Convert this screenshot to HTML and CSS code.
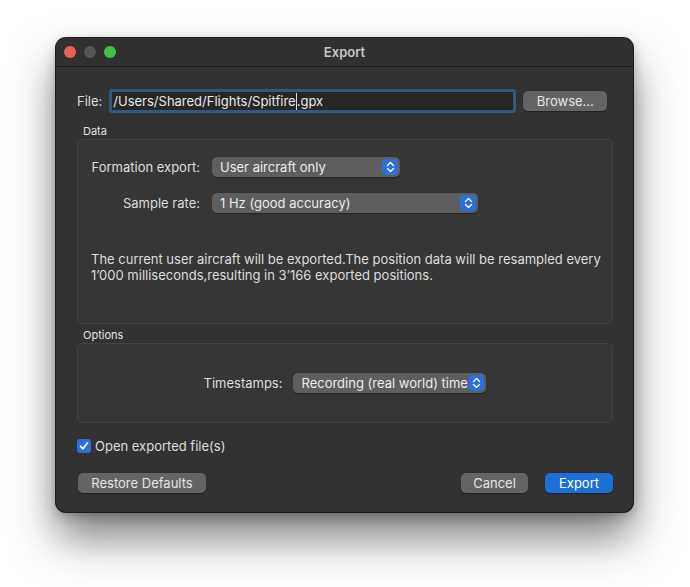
FILE: index.html
```html
<!DOCTYPE html>
<html>
<head>
<meta charset="utf-8">
<link rel="stylesheet" href="styles.css">
</head>
<body>
<div class="window">
  <div class="titlebar">
    <div class="lights">
      <span class="light red"></span>
      <span class="light gray"></span>
      <span class="light green"></span>
    </div>
    <div class="title">Export</div>
  </div>
  <div class="content">
    <div class="file-row">
      <span class="lbl">File:</span>
      <div class="field">/Users/Shared/Flights/Spitfire<span class="caret"></span>.gpx</div>
      <button class="btn browse">Browse...</button>
    </div>
    <div class="group-label data-label">Data</div>
    <div class="box data-box">
      <div class="form-row">
        <span class="row-lbl">Formation export:</span>
        <div class="popup w188"><span>User aircraft only</span><span class="stepper"><svg width="9" height="12" viewBox="0 0 9 12"><path d="M1.5 4.5 L4.5 1.5 L7.5 4.5 M1.5 7.5 L4.5 10.5 L7.5 7.5" fill="none" stroke="#fff" stroke-width="1.4" stroke-linecap="round" stroke-linejoin="round"/></svg></span></div>
      </div>
      <div class="form-row">
        <span class="row-lbl">Sample rate:</span>
        <div class="popup w266"><span>1 Hz (good accuracy)</span><span class="stepper"><svg width="9" height="12" viewBox="0 0 9 12"><path d="M1.5 4.5 L4.5 1.5 L7.5 4.5 M1.5 7.5 L4.5 10.5 L7.5 7.5" fill="none" stroke="#fff" stroke-width="1.4" stroke-linecap="round" stroke-linejoin="round"/></svg></span></div>
      </div>
      <p class="desc">The current user aircraft will be exported.The position data will be resampled every 1’000 milliseconds,resulting in 3’166 exported positions.</p>
    </div>
    <div class="group-label options-label">Options</div>
    <div class="box options-box">
      <div class="form-row center">
        <span class="ts-lbl">Timestamps:</span>
        <div class="popup w193"><span>Recording (real world) time</span><span class="stepper"><svg width="9" height="12" viewBox="0 0 9 12"><path d="M1.5 4.5 L4.5 1.5 L7.5 4.5 M1.5 7.5 L4.5 10.5 L7.5 7.5" fill="none" stroke="#fff" stroke-width="1.4" stroke-linecap="round" stroke-linejoin="round"/></svg></span></div>
      </div>
    </div>
    <label class="check-row">
      <span class="checkbox"><svg width="10" height="10" viewBox="0 0 10 10"><path d="M1.5 5.2 L4 7.8 L8.6 1.8" fill="none" stroke="#fff" stroke-width="1.7" stroke-linecap="round" stroke-linejoin="round"/></svg></span>
      <span>Open exported file(s)</span>
    </label>
    <div class="buttons">
      <button class="btn restore">Restore Defaults</button>
      <div class="spacer"></div>
      <button class="btn cancel">Cancel</button>
      <button class="btn primary">Export</button>
    </div>
  </div>
</div>
</body>
</html>
```
FILE: styles.css
```css
* { box-sizing: border-box; }
html, body { margin: 0; padding: 0; background: #fff; }
body {
  width: 690px;
  height: 587px;
  padding: 38px 0 0 56px;
  font-family: Inter, "Liberation Sans", sans-serif;
  font-size: 13px;
  color: #dedede;
  overflow: hidden;
}
.window {
  width: 577px;
  height: 474px;
  background: #323232;
  border-radius: 10px;
  box-shadow: 0 0 0 1px #1a1a1a, 0 26px 44px rgba(0,0,0,0.5), 0 4px 12px rgba(0,0,0,0.25);
  display: flex;
  flex-direction: column;
}
.titlebar {
  height: 29px;
  border-bottom: 1px solid #1d1d1d;
  display: flex;
  align-items: center;
  position: relative;
  background: #313131;
  border-radius: 10px 10px 0 0;
}
.lights { display: flex; gap: 8px; padding-left: 8px; }
.light { width: 12px; height: 12px; border-radius: 50%; display: block; }
.red { background: #ec5f57; }
.gray { background: #555556; }
.green { background: #3fc04b; }
.title {
  position: absolute;
  left: 0; right: 0; top: 0; bottom: 0;
  display: flex; align-items: center; justify-content: center;
  font-weight: 600;
  color: #c6c6c6;
  font-size: 13px;
  pointer-events: none;
}
.content {
  padding: 22px 20px 0 21px;
  display: flex;
  flex-direction: column;
}
.file-row {
  display: flex;
  align-items: center;
  height: 24px;
}
.lbl { margin-right: 7px; }
.field {
  width: 407px;
  height: 24px;
  background: #262626;
  border: 3px solid #35587a;
  border-radius: 3px;
  padding: 0 0 0 1px;
  display: flex;
  align-items: center;
  color: #e8e8e8;
  font-size: 13px;
}
.caret { display: inline-block; width: 1px; height: 17px; background: #ddd; }
.btn {
  font-family: inherit;
  font-size: 13px;
  color: #e4e4e4;
  background: #646464;
  border: none;
  border-radius: 5px;
  height: 20px;
  padding: 0;
  box-shadow: 0 0.5px 1px rgba(0,0,0,0.35);
}
.browse { width: 84px; margin-left: 7px; }
.group-label {
  font-size: 11px;
  color: #e2e2e2;
  padding-left: 6px;
  line-height: 14px;
  margin-bottom: 1px;
}
.data-label { margin-top: 11px; }
.options-label { margin-top: 4px; }
.box {
  width: 536px;
  background: #363636;
  border: 1px solid #424242;
  border-radius: 5px;
}
.data-box {
  height: 185px;
  padding: 17px 0 0 0;
}
.form-row {
  display: flex;
  align-items: center;
  height: 20px;
  margin-bottom: 16px;
}
.row-lbl {
  width: 122px;
  text-align: right;
  margin-right: 12px;
}
.popup {
  height: 20px;
  background: #5e5e5e;
  border-radius: 5px;
  display: flex;
  align-items: center;
  justify-content: space-between;
  padding: 0 2px 0 8px;
  color: #ececec;
  box-shadow: 0 0.5px 1px rgba(0,0,0,0.35);
}
.w188 { width: 188px; }
.w266 { width: 266px; }
.w193 { width: 193px; }
.stepper {
  width: 16px;
  height: 16px;
  background: #2c6fd8;
  border-radius: 4px;
  display: flex;
  align-items: center;
  justify-content: center;
}
.desc {
  margin: 38px 0 0 13px;
  line-height: 16px;
  width: 512px;
}
.options-box {
  height: 80px;
  display: flex;
  align-items: center;
  justify-content: center;
}
.options-box .form-row { margin: 0; }
.ts-lbl { margin-right: 11px; }
.check-row {
  display: flex;
  align-items: center;
  margin-top: 15px;
  height: 16px;
}
.checkbox {
  width: 14px;
  height: 14px;
  background: #2c6fd8;
  border-radius: 3px;
  display: flex;
  align-items: center;
  justify-content: center;
  margin-right: 4px;
}
.buttons {
  display: flex;
  align-items: center;
  margin-top: 19px;
  padding-left: 1px;
  width: 536px;
}
.spacer { flex: 1; }
.restore { width: 128px; }
.cancel { width: 67px; margin-right: 17px; }
.primary { width: 68px; background: #1c6fd7; color: #fff; }
```
